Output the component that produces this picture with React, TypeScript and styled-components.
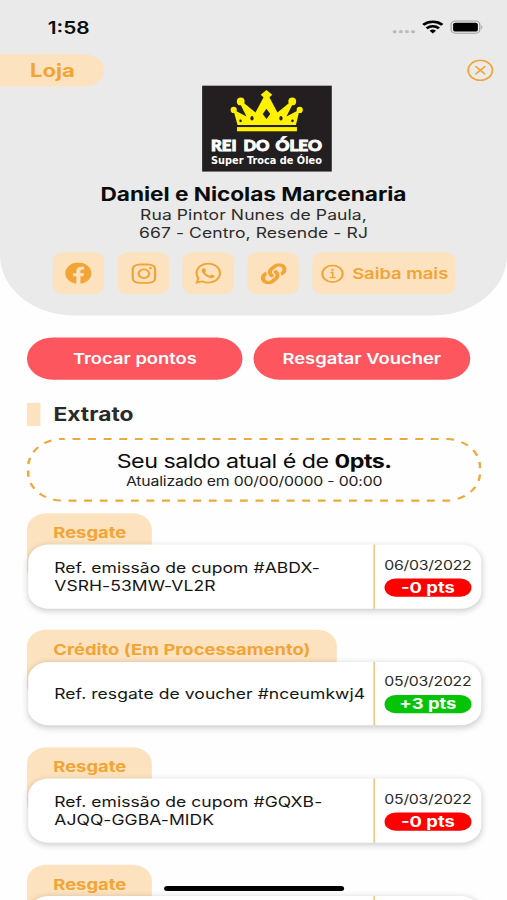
import React from "react";
import styled, { createGlobalStyle } from "styled-components";
import { FaFacebook, FaInstagram, FaWhatsapp, FaLink } from "react-icons/fa";

const ORANGE = "#f2a435";
const PEACH = "#fde2bf";

const Global = createGlobalStyle`
  html, body { margin: 0; background: #fefefe; overflow: hidden; }
  *, *::before, *::after { box-sizing: border-box; }
`;

/* The phone canvas is 414x896 points, stretched over the 507x900 window. */
const Viewport = styled.div`
  width: 507px;
  height: 900px;
  overflow: hidden;
`;

const Phone = styled.div`
  position: relative;
  width: 414px;
  height: 896px;
  overflow: hidden;
  transform: scale(1.22464, 1.00446);
  transform-origin: 0 0;
  font-family: Inter, "Liberation Sans", sans-serif;
  color: #0c0c0c;
  background: #fefefe;
`;

const Header = styled.header`
  height: 314px;
  background: #eaeaea;
  border-radius: 0 0 60px 60px;
  display: flex;
  flex-direction: column;
`;

const StatusBar = styled.div`
  height: 54px;
  padding: 0 20px 0 39px;
  display: flex;
  justify-content: space-between;
`;

const Clock = styled.span`
  margin-top: 17.5px;
  font-size: 17px;
  line-height: 20px;
  font-weight: 600;
`;

const StatusIcons = styled.svg`
  margin-top: 19px;
  width: 76px;
  height: 16px;
`;

const TitleRow = styled.div`
  height: 32px;
  display: flex;
  justify-content: space-between;
  padding-right: 11px;
`;

const ShopPill = styled.div`
  width: 85px;
  height: 32px;
  padding-left: 24.5px;
  border-radius: 0 16px 16px 0;
  background: ${PEACH};
  color: ${ORANGE};
  font-size: 18px;
  line-height: 33.5px;
  font-weight: 700;
`;

const CloseIcon = styled.svg`
  width: 22px;
  height: 22px;
  margin-top: 5px;
`;

const LogoBox = styled.svg`
  width: 106px;
  height: 86px;
  margin: -0.8px 0 0 165px;
  flex: none;
`;

const ShopName = styled.h1`
  margin: 9.8px 0 0;
  font-size: 18.5px;
  line-height: 24px;
  font-weight: 700;
  letter-spacing: -0.04px;
  text-align: center;
`;

const Address = styled.p`
  margin: 0;
  font-size: 14.3px;
  line-height: 18px;
  letter-spacing: 0.08px;
  text-align: center;
  color: #2c2c2c;
`;

const Actions = styled.div`
  display: flex;
  gap: 11px;
  margin: 10px 0 0 43.3px;
`;

const IconButton = styled.button<{ $wide?: boolean }>`
  width: ${(p) => (p.$wide ? 117 : 42)}px;
  height: 42px;
  border: 0;
  padding: 0;
  border-radius: 9px;
  background: ${PEACH};
  color: ${ORANGE};
  display: flex;
  align-items: center;
  justify-content: center;
  gap: 7px;
  font: 600 15px Inter, sans-serif;
  white-space: nowrap;
`;

const Buttons = styled.div`
  display: flex;
  gap: 9px;
  margin: 21.5px 0 0 22px;
`;

const RedButton = styled.button`
  width: 176.3px;
  height: 42px;
  border: 0;
  padding: 0;
  border-radius: 21px;
  background: #fd565f;
  color: #fff;
  font: 600 15px Inter, sans-serif;
`;

const SectionTitle = styled.h2`
  margin: 23px 0 0 22px;
  height: 23px;
  display: flex;
  gap: 11px;
  font-size: 18.6px;
  line-height: 23px;
  font-weight: 700;
  color: #2a2a2a;
  &::before {
    content: "";
    width: 10.7px;
    background: ${PEACH};
  }
`;

const Balance = styled.section`
  position: relative;
  width: 371px;
  height: 64px;
  margin: 12px 0 0 22px;
  padding-top: 12.5px;
  text-align: center;
`;

const Outline = styled.svg`
  position: absolute;
  inset: 0;
  width: 371px;
  height: 64px;
`;

const BalanceText = styled.div`
  font-size: 19px;
  line-height: 24px;
  letter-spacing: -0.42px;
`;

const Updated = styled.div`
  font-size: 12.9px;
  line-height: 16px;
  letter-spacing: -0.14px;
  color: #222;
`;

const List = styled.main`
  margin: 11px 0 0 22px;
  width: 371.2px;
`;

const Entry = styled.article`
  height: 116.7px;
`;

const EntryTab = styled.div<{ $wide?: boolean }>`
  width: ${(p) => (p.$wide ? 253 : 102)}px;
  height: 72px;
  padding: 10px 0 0 21.5px;
  border-radius: 16px 16px 0 16px;
  background: ${PEACH};
  color: ${ORANGE};
  font-size: 15px;
  line-height: 20px;
  font-weight: 700;
  letter-spacing: 0.02px;
  white-space: nowrap;
`;

const Card = styled.div`
  position: relative;
  height: 63.6px;
  margin: -40.4px 0 0 1px;
  border-radius: 17px;
  background: #fff;
  box-shadow: 0 2px 6px rgba(0, 0, 0, 0.2);
  display: flex;
`;

const Description = styled.div`
  flex: 1;
  padding-left: 21.3px;
  display: flex;
  align-items: center;
  font-size: 14.3px;
  line-height: 18px;
  letter-spacing: 0.05px;
  white-space: pre;
  color: #161616;
`;

const Side = styled.div`
  width: 88.2px;
  border-left: 1.4px solid #f1b75f;
  padding: 11.4px 8px 0 7.6px;
  font-size: 12.9px;
  line-height: 18px;
  letter-spacing: -0.2px;
  text-align: center;
  color: #2b2b2b;
`;

const Points = styled.div<{ $credit?: boolean }>`
  height: 18px;
  margin-top: 4px;
  border-radius: 9px;
  background: ${(p) => (p.$credit ? "#05c405" : "#fe0000")};
  color: #fff;
  font-size: 15px;
  line-height: 18px;
  letter-spacing: 0;
  font-weight: 700;
`;

const HomeIndicator = styled.div`
  position: absolute;
  left: 134px;
  top: 882px;
  width: 147px;
  height: 5.4px;
  border-radius: 3px;
  background: #000;
`;

const Logo = () => (
  <LogoBox viewBox="0 0 130 86" preserveAspectRatio="none">
    <rect width="130" height="86" fill="#231f20" />
    <g fill="#fff200">
      <path d="M35.5 39.5 L31.5 25 L33 25 L44.5 31 L37.5 17 L40 16 L53.5 27 L62 11 H67 L75.5 27 L89 16 L91.5 17 L84.5 31 L96 25 L97.5 25 L94 39.5Z" />
      <path d="M64.5 4.5 L70.3 9.3 L64.5 14.5 L58.7 9.3Z" />
      <circle cx="38.7" cy="16" r="3.9" />
      <circle cx="90.3" cy="16" r="3.9" />
      <circle cx="31.7" cy="24.5" r="3.1" />
      <circle cx="97.8" cy="24.5" r="3.1" />
      <rect x="35" y="41.5" width="60" height="4.2" />
    </g>
    <g fill="#231f20">
      <path d="M64.5 23.3 L68.3 28.5 L64.5 33.5 L60.7 28.5Z" />
      <ellipse cx="50" cy="32.8" rx="1.6" ry="2.2" />
      <ellipse cx="79" cy="32.8" rx="1.6" ry="2.2" />
      <circle cx="38.5" cy="35.3" r="1.3" />
      <circle cx="90.5" cy="35.3" r="1.3" />
    </g>
    <g fill="#fff" fontWeight="700">
      <g fontFamily="Lato, sans-serif" fontWeight="900" fontSize="14.8" stroke="#fff" strokeWidth="0.9">
        <text x="9" y="65.2" textLength="25.5" lengthAdjust="spacingAndGlyphs">REI</text>
        <text x="41.5" y="65.2" textLength="26" lengthAdjust="spacingAndGlyphs">DO</text>
        <text x="73.5" y="65.2" textLength="46.5" lengthAdjust="spacingAndGlyphs">ÓLEO</text>
      </g>
      <text x="9" y="77.8" fontFamily="DejaVu Sans, sans-serif" fontSize="9.6" textLength="111" lengthAdjust="spacingAndGlyphs">Super Troca de Óleo</text>
    </g>
  </LogoBox>
);

const entries = [
  { tab: "Resgate", text: "Ref. emissão de cupom #ABDX-\nVSRH-53MW-VL2R", date: "06/03/2022", points: "-0 pts" },
  { tab: "Crédito (Em Processamento)", text: "Ref. resgate de voucher #nceumkwj4", date: "05/03/2022", points: "+3 pts", credit: true },
  { tab: "Resgate", text: "Ref. emissão de cupom #GQXB-\nAJQQ-GGBA-MIDK", date: "05/03/2022", points: "-0 pts" },
  { tab: "Resgate", text: "", date: "", points: "" },
];

export default function App() {
  return (
    <Viewport>
      <Global />
      <Phone>
        <Header>
          <StatusBar>
            <Clock>1:58</Clock>
            <StatusIcons viewBox="0 0 76 16">
              <g fill="#bcbcbc">
                <circle cx="4.3" cy="12.5" r="1.7" />
                <circle cx="9.3" cy="12.5" r="1.7" />
                <circle cx="14.3" cy="12.5" r="1.7" />
                <circle cx="19.3" cy="12.5" r="1.7" />
              </g>
              <g fill="none" stroke="#000" strokeWidth="2.5">
                <path d="M27.6 5.8 A11.3 11.3 0 0 1 43.2 5.8" />
                <path d="M30.4 9.2 A7.2 7.2 0 0 1 40.4 9.2" />
              </g>
              <path d="M35.4 14.3 L32.8 11.6 A3.8 3.8 0 0 1 38 11.6Z" fill="#000" />
              <rect x="50.4" y="2" width="23.4" height="12" rx="3.4" fill="none" stroke="#a0a0a0" />
              <rect x="52" y="3.6" width="20.2" height="8.8" rx="1.9" fill="#000" />
              <path d="M75 6.2 V10 Q76 9.6 76 8.1 T75 6.2" fill="#999" />
            </StatusIcons>
          </StatusBar>
          <TitleRow>
            <ShopPill>Loja</ShopPill>
            <CloseIcon viewBox="0 0 22 22" fill="none" stroke={ORANGE} strokeWidth="1.5">
              <circle cx="11.2" cy="11" r="9.9" />
              <path d="M7.2 7 L15.2 15 M15.2 7 L7.2 15" />
            </CloseIcon>
          </TitleRow>
          <Logo />
          <ShopName>Daniel e Nicolas Marcenaria</ShopName>
          <Address>
            Rua Pintor Nunes de Paula,
            <br />
            667 - Centro, Resende - RJ
          </Address>
          <Actions>
            <IconButton><FaFacebook size={22} /></IconButton>
            <IconButton><FaInstagram size={23} /></IconButton>
            <IconButton><FaWhatsapp size={24} /></IconButton>
            <IconButton><FaLink size={21} /></IconButton>
            <IconButton $wide>
              <svg width="19" height="19" viewBox="0 0 19 19" fill="none" stroke={ORANGE} strokeWidth="1.7">
                <circle cx="9.5" cy="9.5" r="8.3" />
                <path d="M7.8 8.3 H9.7 V13.3 M7.3 13.3 H12" strokeWidth="1.3" />
                <circle cx="9.5" cy="5.7" r="1.1" fill={ORANGE} stroke="none" />
              </svg>
              Saiba mais
            </IconButton>
          </Actions>
        </Header>

        <Buttons>
          <RedButton>Trocar pontos</RedButton>
          <RedButton>Resgatar Voucher</RedButton>
        </Buttons>

        <SectionTitle>Extrato</SectionTitle>

        <Balance>
          <Outline viewBox="0 0 371 64">
            <rect x="1" y="1" width="369" height="61.4" rx="28" fill="none" stroke="#eda83e" strokeWidth="2" strokeDasharray="6.4 6.32" strokeDashoffset="4.5" />
          </Outline>
          <BalanceText>Seu saldo atual é de <b>0pts.</b></BalanceText>
          <Updated>Atualizado em 00/00/0000 - 00:00</Updated>
        </Balance>

        <List>
          {entries.map((e, i) => (
            <Entry key={i}>
              <EntryTab $wide={e.credit}>{e.tab}</EntryTab>
              <Card>
                <Description>{e.text}</Description>
                <Side>
                  {e.date && <div>{e.date}</div>}
                  {e.points && <Points $credit={e.credit}>{e.points}</Points>}
                </Side>
              </Card>
            </Entry>
          ))}
        </List>
        <HomeIndicator />
      </Phone>
    </Viewport>
  );
}
